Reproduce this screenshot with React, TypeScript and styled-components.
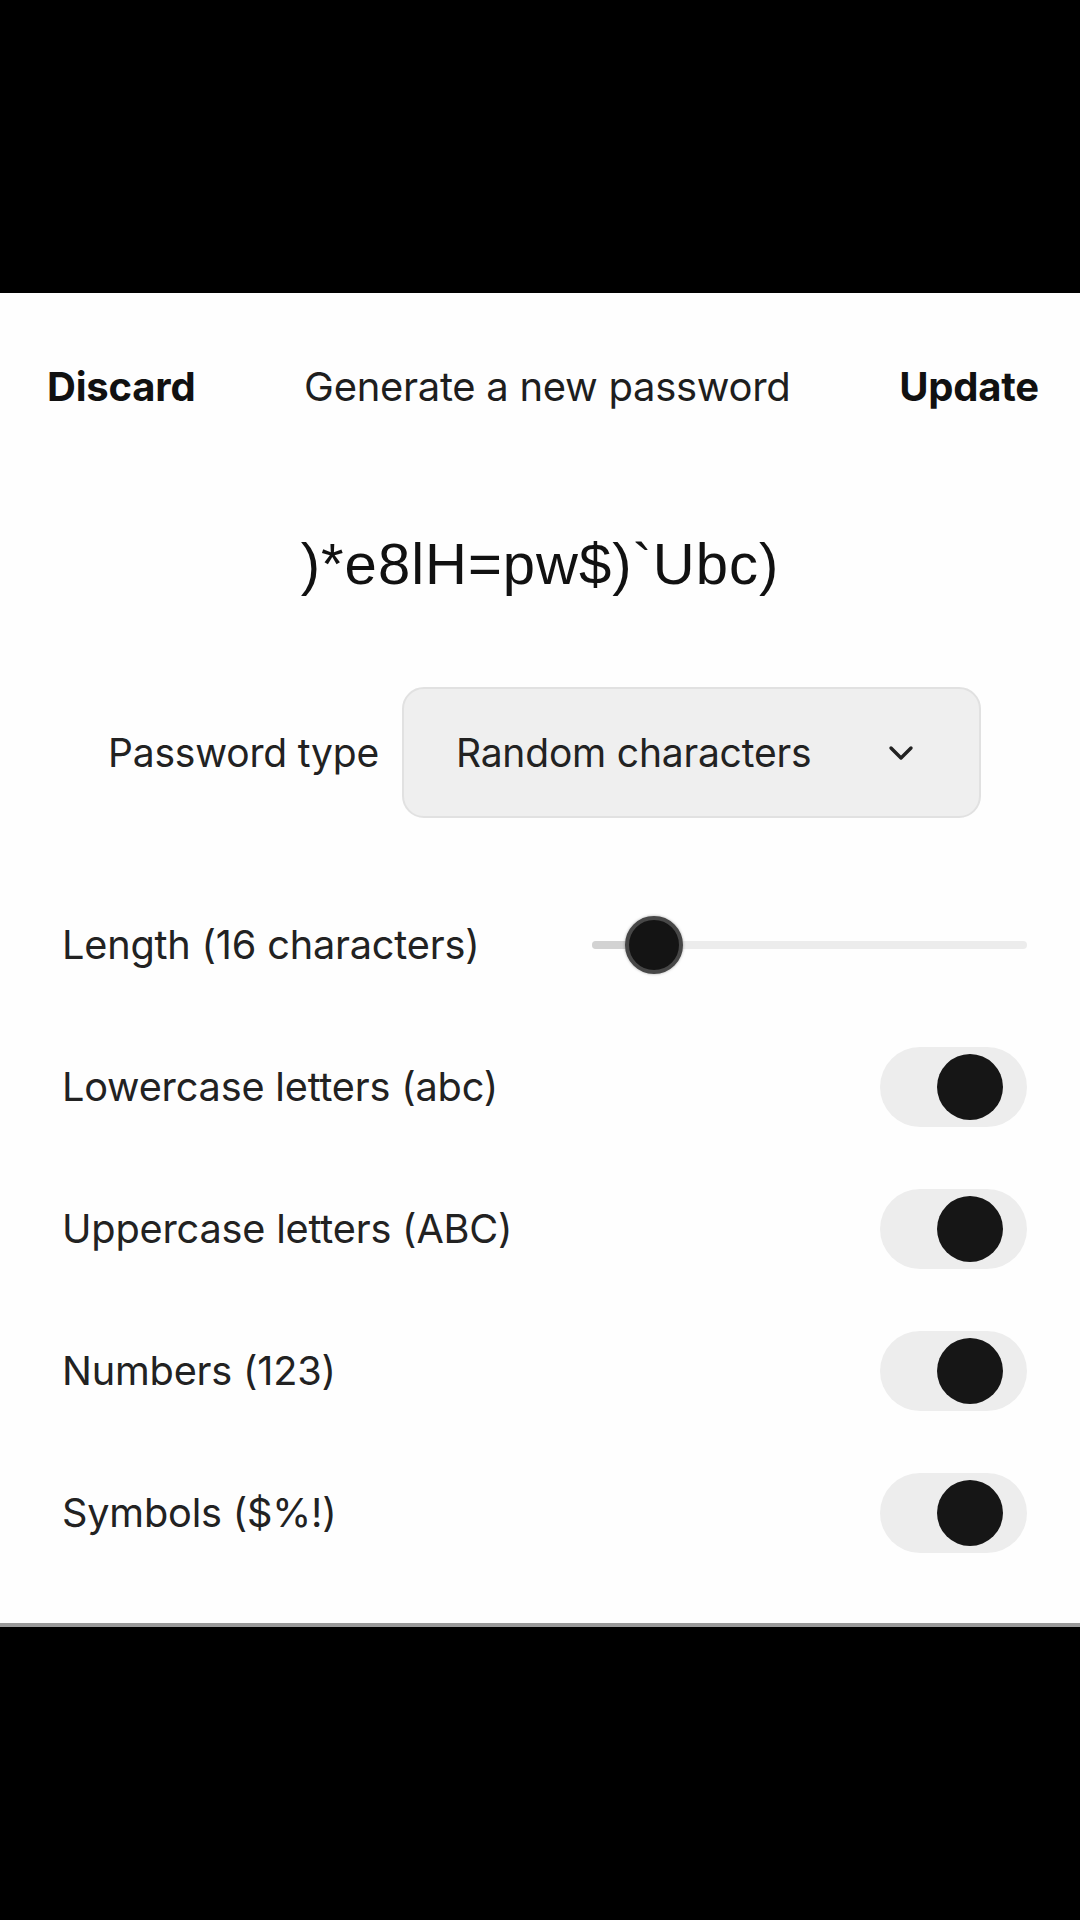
import React, { useState } from "react";
import styled, { createGlobalStyle } from "styled-components";

const GlobalStyle = createGlobalStyle`
  html, body {
    margin: 0;
    padding: 0;
    background: #000;
  }
  body {
    font-family: Inter, "Noto Sans", "Liberation Sans", sans-serif;
    -webkit-font-smoothing: antialiased;
  }
`;

const Screen = styled.div`
  display: flex;
  flex-direction: column;
  min-height: 1920px;
  padding-top: 293px;
  box-sizing: border-box;
  background: #000;
`;

const Sheet = styled.div`
  display: flex;
  flex-direction: column;
  height: 1330px;
  background: #fefefe;
  border-bottom: 4px solid #9a9a9a;
`;

const Header = styled.header`
  display: flex;
  align-items: center;
  justify-content: space-between;
  height: 186px;
  padding: 0 41px 0 47px;
`;

const HeaderButton = styled.button`
  border: 0;
  background: none;
  padding: 0;
  font-family: inherit;
  font-size: 40px;
  font-weight: 700;
  color: #111;
  letter-spacing: -0.2px;
`;

const Title = styled.h1`
  margin: 0;
  font-size: 40px;
  font-weight: 400;
  color: #1e1e1e;
  letter-spacing: -0.3px;
`;

const PasswordLine = styled.div`
  display: flex;
  align-items: center;
  justify-content: center;
  height: 168px;
  font-family: "Liberation Sans", Arial, sans-serif;
  font-size: 58px;
  letter-spacing: 1px;
  color: #111;
`;

const TypeRow = styled.div`
  display: flex;
  align-items: center;
  justify-content: center;
  gap: 23px;
  height: 211px;
  padding: 0 0 16px 9px;
`;

const Label = styled.span<{ $size?: number }>`
  font-size: ${({ $size = 39 }) => $size}px;
  color: #222;
  letter-spacing: -0.2px;
  white-space: nowrap;
`;

const SelectBox = styled.div`
  display: flex;
  align-items: center;
  justify-content: space-between;
  box-sizing: border-box;
  width: 579px;
  height: 131px;
  padding: 0 65px 0 52px;
  background: #efefef;
  border: 2px solid #e1e1e1;
  border-radius: 22px;
`;

const Settings = styled.div`
  display: flex;
  flex-direction: column;
  padding: 0 53px 0 62px;
`;

const SettingRow = styled.div`
  display: flex;
  align-items: center;
  justify-content: space-between;
  height: 142px;
`;

const SliderTrack = styled.div`
  position: relative;
  width: 435px;
  height: 8px;
  border-radius: 4px;
  background: #ececec;
`;

const SliderFill = styled.div`
  height: 100%;
  border-radius: 4px;
  background: #d2d2d2;
`;

const SliderThumb = styled.div`
  position: absolute;
  top: 50%;
  width: 58px;
  height: 58px;
  box-sizing: border-box;
  border-radius: 50%;
  background: #141414;
  border: 4px solid #474747;
  box-shadow: 0 0 3px rgba(0, 0, 0, 0.35);
  transform: translate(-50%, -50%);
`;

const ToggleTrack = styled.button<{ $on: boolean }>`
  display: flex;
  align-items: center;
  justify-content: ${({ $on }) => ($on ? "flex-end" : "flex-start")};
  box-sizing: border-box;
  width: 147px;
  height: 80px;
  padding: 0 24px;
  border: 0;
  border-radius: 40px;
  background: #ededed;
  cursor: pointer;
`;

const ToggleKnob = styled.span`
  width: 66px;
  height: 66px;
  border-radius: 50%;
  background: #161616;
`;

function Chevron() {
  return (
    <svg width="26" height="16" viewBox="0 0 26 16" fill="none">
      <path
        d="M3 3 L13 13 L23 3"
        stroke="#222"
        strokeWidth="3.4"
        strokeLinecap="round"
        strokeLinejoin="round"
      />
    </svg>
  );
}

function Slider({ value, min, max }: { value: number; min: number; max: number }) {
  const pct = ((value - min) / (max - min)) * 100;
  return (
    <SliderTrack>
      <SliderFill style={{ width: `${pct}%` }} />
      <SliderThumb style={{ left: `${pct}%` }} />
    </SliderTrack>
  );
}

const options = [
  "Lowercase letters (abc)",
  "Uppercase letters (ABC)",
  "Numbers (123)",
  "Symbols ($%!)",
];

export default function App() {
  const [flags, setFlags] = useState([true, true, true, true]);
  const length = 16;

  return (
    <>
      <GlobalStyle />
      <Screen>
        <Sheet>
          <Header>
            <HeaderButton>Discard</HeaderButton>
            <Title>Generate a new password</Title>
            <HeaderButton>Update</HeaderButton>
          </Header>
          <PasswordLine>)*e8lH=pw$)`Ubc)</PasswordLine>
          <TypeRow>
            <Label>Password type</Label>
            <SelectBox>
              <Label>Random characters</Label>
              <Chevron />
            </SelectBox>
          </TypeRow>
          <Settings>
            <SettingRow>
              <Label $size={39.7}>Length ({length} characters)</Label>
              <Slider value={length} min={8} max={64} />
            </SettingRow>
            {options.map((name, i) => (
              <SettingRow key={name}>
                <Label $size={39.7}>{name}</Label>
                <ToggleTrack
                  $on={flags[i]}
                  onClick={() =>
                    setFlags((f) => f.map((v, j) => (j === i ? !v : v)))
                  }
                >
                  <ToggleKnob />
                </ToggleTrack>
              </SettingRow>
            ))}
          </Settings>
        </Sheet>
      </Screen>
    </>
  );
}
